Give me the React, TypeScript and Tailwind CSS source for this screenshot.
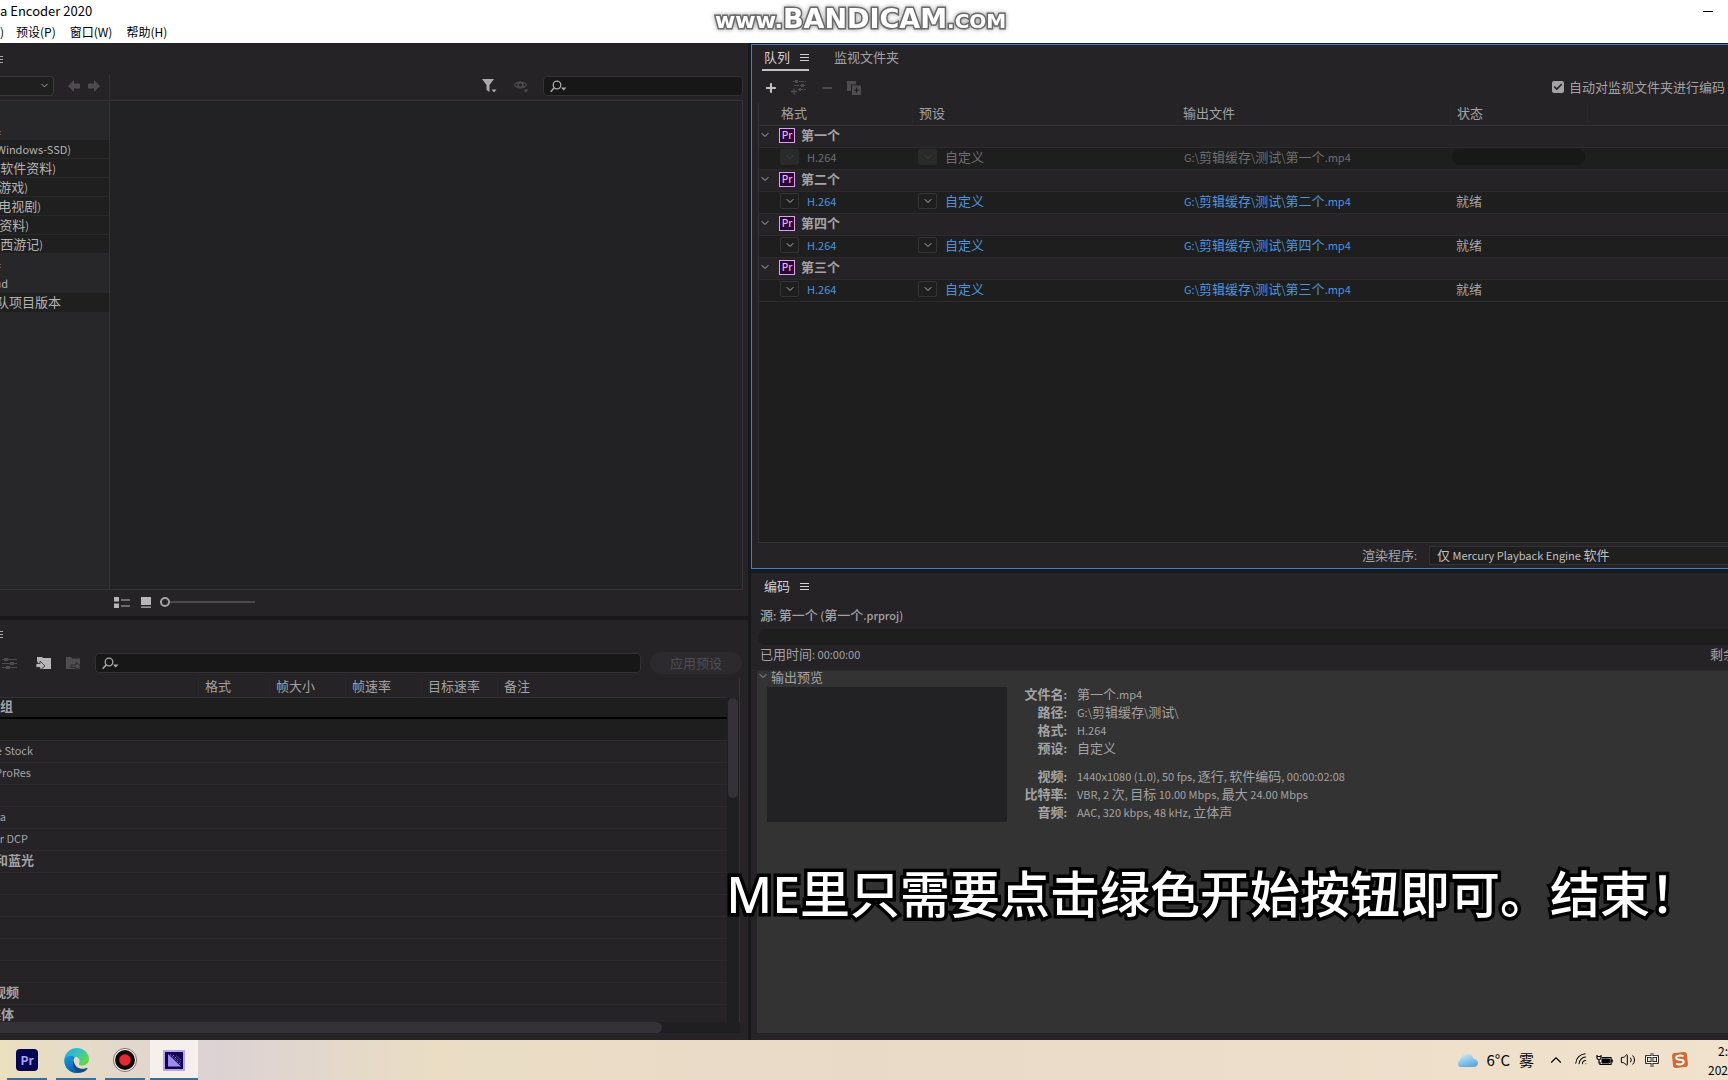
import { useState } from 'react';
import { Check, ChevronDown, ChevronUp, Minus, Plus, Wifi, Volume2 } from 'lucide-react';

const DRIVES = [
  { name: 'Windows-SSD)', width: 'w-[71px]' },
  { name: '软件资料)', width: 'w-[56px]' },
  { name: '游戏)', width: 'w-[28px]' },
  { name: '电视剧)', width: 'w-[41px]' },
  { name: '资料)', width: 'w-[29px]' },
  { name: '西游记)', width: 'w-[43px]' },
];

const QUEUE = [
  { name: '第一个', ready: false },
  { name: '第二个', ready: true },
  { name: '第四个', ready: true },
  { name: '第三个', ready: true },
];

const PRESETS = [
  { name: 'e Stock', width: 'w-[33px]' },
  { name: 'ProRes', width: 'w-[31px]' },
  { name: '', width: 'w-0' },
  { name: 'a', width: 'w-[6px]' },
  { name: 'r DCP', width: 'w-[28px]' },
  { name: '和蓝光', width: 'w-[34px]' },
  { name: '', width: 'w-0' },
  { name: '', width: 'w-0' },
  { name: '', width: 'w-0' },
  { name: '', width: 'w-0' },
  { name: '', width: 'w-0' },
  { name: '视频', width: 'w-[19px]' },
  { name: '媒体', width: 'w-[14px]' },
];

const FILE_INFO = [
  ['文件名', '第一个.mp4'],
  ['路径', 'G:\\剪辑缓存\\测试\\'],
  ['格式', 'H.264'],
  ['预设', '自定义'],
];

const MEDIA_INFO = [
  ['视频', '1440x1080 (1.0), 50 fps, 逐行, 软件编码, 00:00:02:08'],
  ['比特率', 'VBR, 2 次, 目标 10.00 Mbps, 最大 24.00 Mbps'],
  ['音频', 'AAC, 320 kbps, 48 kHz, 立体声'],
];

// Latin runs are set smaller than the Chinese around them
function Mixed({ text }: { text: string }) {
  return (
    <>
      {text.split(/([\x20-\x7e]+)/).filter(Boolean).map((part, i) =>
        /^[\x20-\x7e]+$/.test(part) ? (
          <span key={i} className="text-[11px] whitespace-pre">{part}</span>
        ) : (
          part
        )
      )}
    </>
  );
}

// Labels of the left column run off the window edge, so only the tail shows
function Tail({ text, width }: { text: string; width: string }) {
  return (
    <span className={`flex justify-end overflow-hidden whitespace-nowrap ${width}`}>
      <span><Mixed text={text} /></span>
    </span>
  );
}

function MenuLines() {
  return (
    <svg width="9" height="9" viewBox="0 0 9 9" stroke="currentColor" className="shrink-0">
      <path d="M0 1.5h9M0 4.5h9M0 7.5h9" />
    </svg>
  );
}

function SearchIcon() {
  return (
    <svg width="17" height="13" viewBox="0 0 17 13" fill="none" stroke="currentColor" className="shrink-0">
      <circle cx="7" cy="5" r="3.8" strokeWidth="1.3" />
      <path d="M4.3 7.7 0.7 11.8" strokeWidth="1.5" />
      <path d="M11 7.5h5.5L13.7 10.5z" fill="currentColor" stroke="none" />
    </svg>
  );
}

function SlidersIcon() {
  return (
    <svg width="15" height="13" viewBox="0 0 15 13" stroke="currentColor" fill="currentColor">
      <path d="M0 2.5h15M0 6.5h15M0 10.5h15" />
      <path d="M2 1h4v3H2zM8 5h4v3H8zM4 9h4v3H4z" stroke="none" />
    </svg>
  );
}

function PresetAddIcon() {
  return (
    <svg width="15" height="15" viewBox="0 0 15 15" stroke="currentColor" fill="currentColor">
      <path d="M2 1.5h13M3 5.5h12M7 9.5h8" strokeDasharray="5 1" />
      <path d="M4 0h3v3H4zM10 4h3v3h-3zM8 8h2v3H8z" stroke="none" />
      <path d="M0 11.5h6M3 8.5v6" strokeWidth="1.4" />
    </svg>
  );
}

function PremiereBadge() {
  return (
    <span className="flex h-[15px] w-4 items-center justify-center border border-[#d9a5ea] bg-[#2a0636] text-[10px] leading-none font-medium text-[#e3b4f3]">
      Pr
    </span>
  );
}

function SmallDropdown({ label, disabled }: { label: string; disabled?: boolean }) {
  return (
    <button
      aria-label={label}
      disabled={disabled}
      className={`flex h-4 w-[19px] items-center justify-center rounded-[2px] border ${
        disabled ? 'border-[#2a2a2b] bg-[#2a2a2b] text-[#444]' : 'border-[#343435] text-[#b4b4b4]'
      }`}
    >
      <ChevronDown size={12} />
    </button>
  );
}

function MediaBrowser() {
  return (
    <section className="flex flex-col overflow-hidden bg-[#252326]">
      <div className="flex h-8 items-center text-[#a8a8a8]">
        <button aria-label="菜单" className="flex w-[3px] justify-end overflow-hidden">
          <MenuLines />
        </button>
      </div>
      <div className="flex h-[25px] shrink-0">
        <div className="flex w-[110px] items-center border-r border-[#343336] pb-[3px]">
          <div className="relative">
            <select aria-label="位置" className="block h-5 w-[54px] appearance-none rounded-r-sm border border-l-0 border-[#39383b] bg-[#1f1f20]" />
            <ChevronDown size={11} className="pointer-events-none absolute top-1 right-1 text-[#b0b0b0]" />
          </div>
          <div className="ml-[14px] flex gap-2 text-[#4d4c4f]">
            <button aria-label="后退">
              <svg width="12" height="12" viewBox="0 0 12 12" fill="currentColor"><path d="M0 6 6 0v3.5h6v5H6V12z" /></svg>
            </button>
            <button aria-label="前进">
              <svg width="12" height="12" viewBox="0 0 12 12" fill="currentColor"><path d="M12 6 6 0v3.5H0v5h6V12z" /></svg>
            </button>
          </div>
        </div>
        <div className="flex flex-1 items-center justify-end pr-[5px] pb-[3px]">
          <button aria-label="筛选" className="mr-[17px] text-[#a9a8aa]">
            <svg width="15" height="14" viewBox="0 0 15 14" fill="currentColor">
              <path d="M0 0h12L7.5 6v7L4.5 11V6zM9.5 10.500h5L12 13.500z" />
            </svg>
          </button>
          <button aria-label="显示" className="mr-[14px] text-[#4d4c4f]">
            <svg width="15" height="14" viewBox="0 0 15 14" fill="none" stroke="currentColor">
              <path d="M0.500 6C3 2 10 2 12.500 6 10 10 3 10 0.500 6z" strokeWidth="1.2" />
              <circle cx="6.500" cy="6" r="2.500" strokeWidth="1.600" />
              <path d="M9.500 10.500h5L12 13.500z" fill="currentColor" stroke="none" />
            </svg>
          </button>
          <label className="flex h-5 w-[200px] items-center rounded-sm border border-[#323134] bg-[#171717] pl-[6px] text-[#a9a8aa]">
            <SearchIcon />
            <input aria-label="搜索媒体" className="min-w-0 flex-1 bg-transparent text-[13px] outline-none" />
          </label>
        </div>
      </div>
      <div className="mr-[5px] flex min-h-0 flex-1 border-y border-r border-[#343336] bg-[#222224]">
        <div className="w-[110px] shrink-0 border-r border-[#343336] bg-[#272729] pt-5 text-[13px] text-[#b4b3b4]">
          <div className="flex h-[19px] items-center"><Tail text="器" width="w-[1px]" /></div>
          {DRIVES.map((d) => (
            <div key={d.name} className="flex h-[19px] items-center border-b border-[#29292a] bg-[#1f1f20] pb-px">
              <Tail text={d.name} width={d.width} />
            </div>
          ))}
          <div className="flex h-[19px] items-center"><Tail text="器" width="w-[1px]" /></div>
          <div className="flex h-5 items-center"><Tail text="ud" width="w-2" /></div>
          <div className="flex h-[19px] items-center bg-[#1f1f20] pb-[2px]"><Tail text="队项目版本" width="w-[61px]" /></div>
        </div>
      </div>
      <div className="flex h-[26px] items-center pb-[2px] pl-[114px] text-[#b7b6b8]">
        <button aria-label="列表视图">
          <svg width="16" height="11" viewBox="0 0 16 11" fill="currentColor">
            <path d="M0 0h5v4.500H0zM0 6.500h5V11H0zM7 2.500h9v1H7zM7 8.500h9v1H7z" />
          </svg>
        </button>
        <button aria-label="缩略图视图" className="ml-[11px]">
          <svg width="10" height="11" viewBox="0 0 10 11" fill="currentColor"><path d="M0 0h10v8H0zM0 9.500h10v1.200H0z" /></svg>
        </button>
        <input
          type="range"
          aria-label="缩放"
          defaultValue={0}
          className="ml-[9px] h-[2px] w-[95px] appearance-none bg-[#4a494c] [&::-webkit-slider-thumb]:size-[10px] [&::-webkit-slider-thumb]:appearance-none [&::-webkit-slider-thumb]:rounded-full [&::-webkit-slider-thumb]:border-2 [&::-webkit-slider-thumb]:border-[#a3a2a4] [&::-webkit-slider-thumb]:bg-[#252326]"
        />
      </div>
    </section>
  );
}

function PresetBrowser() {
  return (
    <section className="flex flex-col overflow-hidden bg-[#252326]">
      <div className="flex h-7 shrink-0 items-center text-[#a8a8a8]">
        <button aria-label="菜单" className="flex w-[3px] justify-end overflow-hidden"><MenuLines /></button>
      </div>
      <div className="flex h-[30px] shrink-0 items-center pr-[6px] pl-[2px]">
        <button aria-label="预设设置" className="text-[#4d4c4f]"><SlidersIcon /></button>
        <button aria-label="导入预设" className="ml-[19px] text-[#b7b6b8]">
          <svg width="15" height="13" viewBox="0 0 15 13" fill="currentColor">
            <path d="M1 0h5l1 1h8v11H7z" />
            <path d="M1 0h5v5l3 3.500L7 12h-2L1 4z" />
            <path d="M0 6.500h4V4l5 5-5 4v-2.500H0z" stroke="#252326" strokeWidth="0.800" />
          </svg>
        </button>
        <button aria-label="导出预设" className="ml-[15px] text-[#4d4c4f]">
          <svg width="15" height="13" viewBox="0 0 15 13" fill="currentColor">
            <path d="M0 0h5l1 1.500h8V12H0z" />
            <path d="M5 8h5V5.500l5 3.700-5 3.800v-2.500H5z" stroke="#252326" strokeWidth="0.800" />
          </svg>
        </button>
        <label className="ml-[14px] flex h-5 flex-1 items-center rounded-sm border border-[#323134] bg-[#171717] pl-[6px] text-[#a9a8aa]">
          <SearchIcon />
          <input aria-label="搜索预设" className="min-w-0 flex-1 bg-transparent text-[13px] outline-none" />
        </label>
        <button disabled className="ml-[9px] h-[22px] w-[92px] rounded-full bg-[#2c2a2d] text-[13px] text-[#4e4d50]">
          应用预设
        </button>
      </div>
      <div className="mr-2 flex min-h-0 flex-1 border-r border-[#343336]">
        <div className="min-w-0 flex-1 overflow-hidden">
          <table className="w-full table-fixed border-separate border-spacing-0 text-[13px] leading-4 text-[#a3a2a4]">
            <colgroup>
              <col className="w-[198px]" />
              <col className="w-[71px]" />
              <col className="w-[76px]" />
              <col className="w-[76px]" />
              <col className="w-[76px]" />
              <col />
            </colgroup>
            <thead>
              <tr className="h-5">
                <th aria-label="名称" className="border-b border-[#323134]" />
                {['格式', '帧大小', '帧速率', '目标速率', '备注'].map((h) => (
                  <th key={h} className="border-b border-l border-b-[#323134] border-l-[#2a282b] pb-[3px] pl-[6px] text-left font-normal">{h}</th>
                ))}
              </tr>
            </thead>
            <tbody>
              <tr>
                <td colSpan={6} className="h-[21px] border-b-2 border-black bg-[#1e1e1e] pb-[3px] font-bold">
                  <Tail text="组" width="w-[13px]" />
                </td>
              </tr>
              <tr><td colSpan={6} className="h-[22px] border-b border-[#2b2a2d] bg-[#1e1e1e]" /></tr>
              {PRESETS.map((p, i) => (
                <tr key={i}>
                  <td colSpan={6} className={`h-[22px] border-b border-[#2b2a2d] pb-[3px] ${i > 4 ? 'font-bold' : ''}`}>
                    <Tail text={p.name} width={p.width} />
                  </td>
                </tr>
              ))}
            </tbody>
          </table>
        </div>
        <div className="mt-5 w-3 bg-[#1f1e20] px-px">
          <div className="h-[100px] rounded-full bg-[#343236]" />
        </div>
      </div>
      <div className="mr-2 mb-[7px] h-[11px] shrink-0 bg-[#1f1e20]">
        <div className="h-full w-[662px] rounded-r-full bg-[#343236]" />
      </div>
    </section>
  );
}

function QueuePanel() {
  const [autoEncode, setAutoEncode] = useState(true);
  const th = 'border-b border-b-[#323134] border-l-[#2a282b] pb-[2px] text-left font-normal';
  return (
    <section className="flex min-h-0 flex-col overflow-hidden border border-r-0 border-[#4f7ea6] bg-[#252326] text-[13px] text-[#a3a2a4] outline-2 outline-[#0f1a2c]">
      <div className="flex h-[26px] shrink-0 gap-[25px] pl-[10px]">
        <div className="flex items-center gap-[10px] border-b-2 border-[#c4c3c4] text-[#d2d1d2]">
          <button className="pb-px pl-[2px]">队列</button>
          <button aria-label="菜单"><MenuLines /></button>
        </div>
        <button className="pb-[3px]">监视文件夹</button>
      </div>
      <div className="flex h-8 shrink-0 items-center pt-px pr-[3px] pl-3">
        <button aria-label="添加源" className="text-[#c4c3c4]"><Plus size={14} strokeWidth={3.500} /></button>
        <button aria-label="添加输出" className="ml-[13px] text-[#4d4c4f]"><PresetAddIcon /></button>
        <button aria-label="移除" className="ml-[14px] text-[#4d4c4f]"><Minus size={14} strokeWidth={3.500} /></button>
        <button aria-label="重制" className="ml-[13px] text-[#4d4c4f]">
          <svg width="14" height="14" viewBox="0 0 14 14" fill="currentColor">
            <path d="M0 0h9v3.500H4V10H0z" />
            <path d="M5 4.500h9V14H5z" />
            <path d="M7 9.200h5M9.500 6.700v5" stroke="#1c1b1d" />
          </svg>
        </button>
        <label className="ml-auto flex items-center gap-[5px] pb-[2px] whitespace-nowrap">
          <span className="relative flex">
            <input
              type="checkbox"
              checked={autoEncode}
              onChange={(e) => setAutoEncode(e.target.checked)}
              className="size-3 appearance-none rounded-[2px] bg-[#a3a2a4]"
            />
            {autoEncode && <Check size={10} strokeWidth={4} className="pointer-events-none absolute top-px left-px text-[#252326]" />}
          </span>
          自动对监视文件夹进行编码
        </label>
      </div>
      <div className="ml-[6px] min-h-0 flex-1 border-b border-l border-[#323134] bg-[#1e1e1e]">
        <table className="w-full table-fixed border-separate border-spacing-0 leading-4">
          <colgroup>
            <col className="w-[153px]" />
            <col className="w-[265px]" />
            <col className="w-[273px]" />
            <col className="w-[137px]" />
            <col />
          </colgroup>
          <thead>
            <tr className="h-[23px] bg-[#252326]">
              <th className={`${th} pl-[22px]`}>格式</th>
              <th className={`${th} border-l pl-[6px]`}>预设</th>
              <th className={`${th} border-l pl-[5px]`}>输出文件</th>
              <th className={`${th} border-l pl-[6px]`}>状态</th>
              <th aria-label="操作" className={`${th} border-l`} />
            </tr>
          </thead>
          {QUEUE.map((q) => (
            <tbody key={q.name}>
              <tr className="bg-[#252326]">
                <td colSpan={5} className="h-[22px] border-b border-[#2b2a2d] pb-[3px]">
                  <div className="flex items-center">
                    <button aria-label="折叠" className="text-[#b4b4b4]"><ChevronDown size={12} /></button>
                    <span className="ml-2"><PremiereBadge /></span>
                    <span className="ml-[6px] font-bold">{q.name}</span>
                  </div>
                </td>
              </tr>
              <tr className={q.ready ? 'text-[#4f93dc]' : 'text-[#6f6e70]'}>
                <td className="h-[22px] border-b border-[#2b2a2d] pb-[3px]">
                  <div className="flex items-center gap-2 pl-[21px]">
                    <SmallDropdown label="选择格式" disabled={!q.ready} />
                    <a href="#format"><Mixed text="H.264" /></a>
                  </div>
                </td>
                <td className="h-[22px] border-b border-[#2b2a2d] pb-[3px]">
                  <div className="flex items-center gap-2 pl-[6px]">
                    <SmallDropdown label="选择预设" disabled={!q.ready} />
                    <a href="#preset">自定义</a>
                  </div>
                </td>
                <td className="h-[22px] border-b border-[#2b2a2d] pb-[3px] pl-[7px]">
                  <a href="#output"><Mixed text={`G:\\剪辑缓存\\测试\\${q.name}.mp4`} /></a>
                </td>
                <td className="h-[22px] border-b border-[#2b2a2d] pb-[3px] text-[#a3a2a4]">
                  {q.ready ? <span className="pl-[6px]">就绪</span> : <div className="mx-[2px] h-4 rounded-full bg-[#181818]" />}
                </td>
                <td className="h-[22px] border-b border-[#2b2a2d]" />
              </tr>
            </tbody>
          ))}
        </table>
      </div>
      <div className="flex h-[25px] shrink-0 items-center justify-end gap-3">
        <label htmlFor="renderer" className="pb-[2px]"><Mixed text="渲染程序:" /></label>
        <div className="relative w-[299px]">
          <select id="renderer" className="block h-[19px] w-full appearance-none border border-r-0 border-[#323134] bg-[#1f1f20] text-transparent">
            <option>仅 Mercury Playback Engine 软件</option>
          </select>
          <span aria-hidden="true" className="pointer-events-none absolute inset-0 flex items-center pb-[2px] pl-2 text-[#c0bfc0]">
            <span><Mixed text="仅 Mercury Playback Engine 软件" /></span>
          </span>
        </div>
      </div>
    </section>
  );
}

function InfoRows({ rows }: { rows: string[][] }) {
  return (
    <dl className="text-[13px] leading-[18px]">
      {rows.map(([label, value]) => (
        <div key={label} className="flex gap-[10px]">
          <dt className="w-[60px] text-right font-bold whitespace-nowrap"><Mixed text={`${label}:`} /></dt>
          <dd className="whitespace-nowrap"><Mixed text={value} /></dd>
        </div>
      ))}
    </dl>
  );
}

function EncodingPanel() {
  return (
    <section className="flex min-h-0 flex-col overflow-hidden bg-[#252326] text-[13px] text-[#a3a2a4]">
      <div className="flex h-[26px] shrink-0 items-center gap-[10px] pl-[13px] text-[#d2d1d2]">
        <h2>编码</h2>
        <button aria-label="菜单"><MenuLines /></button>
      </div>
      <p className="flex h-[30px] shrink-0 items-center pt-px pl-[9px] font-medium whitespace-pre">
        <span><Mixed text="源: 第一个 (第一个.prproj)" /></span>
      </p>
      <div className="ml-[7px] h-4 shrink-0 rounded-l-full bg-[#1e1e1e]" />
      <div className="flex h-[26px] shrink-0 items-center justify-between border-b border-[#2b2a2d] pb-2 pl-[9px]">
        <span><Mixed text="已用时间: 00:00:00" /></span>
        <span className="w-[18px] overflow-hidden whitespace-nowrap">剩余</span>
      </div>
      <div className="mb-[7px] ml-[6px] flex-1 bg-[#333333]">
        <button className="flex h-[10px] items-center gap-[2px] leading-none">
          <ChevronDown size={12} />输出预览
        </button>
        <div className="flex pt-1 pl-[10px]">
          <div className="mt-[2px] h-[135px] w-[240px] bg-[#222224]" />
          <div className="flex flex-col gap-[10px]">
            <InfoRows rows={FILE_INFO} />
            <InfoRows rows={MEDIA_INFO} />
          </div>
        </div>
      </div>
    </section>
  );
}

function TitleBar() {
  return (
    <header className="relative flex h-[43px] shrink-0 flex-col bg-white text-black">
      <div className="flex h-[22px] items-center justify-between">
        <h1 className="text-[13px] whitespace-nowrap">a Encoder 2020</h1>
        <button aria-label="最小化" className="pr-[15px]">
          <svg width="10" height="1" viewBox="0 0 10 1"><path d="M0 0h10v1H0z" /></svg>
        </button>
      </div>
      <nav className="flex h-5 items-center text-xs">
        <span className="w-4 overflow-hidden">)</span>
        <button className="mr-[14px]">预设(P)</button>
        <button className="mr-[14px]">窗口(W)</button>
        <button>帮助(H)</button>
      </nav>
      <div className="absolute top-[5px] left-[715px] flex items-baseline font-['DejaVu_Sans',sans-serif] leading-none font-bold text-white [paint-order:stroke_fill] [-webkit-text-stroke:3px_#6a6a6a] [filter:drop-shadow(0_0_2px_#999)]">
        <span className="text-[22px]">www.</span>
        <span className="text-[27px]">BANDICAM</span>
        <span className="text-[20px]">.COM</span>
      </div>
    </header>
  );
}

function Taskbar() {
  const app = 'flex h-10 items-center justify-center border-b-2 border-[#2f71a0] pt-[2px]';
  return (
    <footer className="flex h-10 shrink-0 items-center bg-linear-to-r from-[#ebe0c0] via-[#e9dac8] to-[#f0e2cc] text-black">
      <div className="flex flex-1 items-center bg-linear-to-r from-transparent via-[#dcd2d3] via-15% to-[#efe2c0]/0 to-30% pl-[7px]">
        <button aria-label="Premiere Pro" className={`${app} mr-[9px] w-10`}>
          <span className="flex size-[22px] items-center justify-center rounded-[4px] bg-[#06054f] text-xs font-bold text-[#a5a3ff]">Pr</span>
        </button>
        <button aria-label="Edge" className={`${app} mr-[9px] w-10`}>
          <svg width="25" height="25" viewBox="0 0 24 24">
            <defs>
              <linearGradient id="edge-top" x1="0" y1="0" x2="1" y2="0.600">
                <stop offset="0" stopColor="#2aa6dc" />
                <stop offset="0.500" stopColor="#35c1c4" />
                <stop offset="1" stopColor="#62d84b" />
              </linearGradient>
              <linearGradient id="edge-low" x1="0" y1="0" x2="0.700" y2="1">
                <stop offset="0" stopColor="#1b9de0" />
                <stop offset="1" stopColor="#0c4f9c" />
              </linearGradient>
            </defs>
            <path d="M0.300 10.500C1.500 4 6.500 0 12.200 0 19 0 24 5 24 10.500c0 4-3 6.300-6.300 6.300-2.800 0-3.700-1-3.400-2 1.500-2 0.700-5-2.300-6.200C8 7 2.500 7.500 0.300 10.500z" fill="url(#edge-top)" />
            <path d="M0.300 10.500C2.300 7 7.500 6.500 11 8.500c-1.500 1-2 3-1.500 5 1 4 4 6.500 8.500 6.500 2 0 3.500-0.500 4.500-1C20.500 22.500 16 24 12 24 4.500 24-0.500 17.500 0.300 10.500z" fill="url(#edge-low)" />
            <path d="M9.500 12.500c0 4 3 7.800 7.500 7.800 2.500 0 4-0.600 5-1.100 0.500-0.200 0.800 0.200 0.500 0.600C21 21.700 18.500 23.500 16 23.600 10 22.500 7.500 17 9.500 12.500z" fill="#154a86" />
          </svg>
        </button>
        <button aria-label="Bandicam" className={`${app} mr-[5px] w-10`}>
          <svg width="24" height="24" viewBox="0 0 24 24">
            <circle cx="12" cy="12" r="11.500" fill="#fff" stroke="#5a4a44" strokeWidth="0.800" />
            <circle cx="12" cy="12" r="10" fill="#160808" />
            <circle cx="12" cy="12" r="5.800" fill="#e22c33" />
          </svg>
        </button>
        <button aria-label="Media Encoder" className={`${app} w-12 bg-[#f6f0ec]`}>
          <svg width="22" height="21" viewBox="0 0 22 21">
            <path d="M0 0h22v21H0z" fill="#b9a6ea" />
            <path d="M2 2h18v17H2z" fill="#120650" />
            <path d="M5 4v12.500h13z" fill="#9f8bf0" />
            <path d="M7 4.500l11 10.500M10 5l8 7.500M13.500 6l4.500 4" stroke="#8d7be0" strokeDasharray="1.500 1" />
          </svg>
        </button>
      </div>
      <div className="flex h-10 items-center overflow-hidden">
        <svg width="22" height="15" viewBox="0 0 22 15">
          <defs>
            <linearGradient id="cloud" x1="0" y1="0" x2="0.500" y2="1">
              <stop offset="0" stopColor="#d7effc" />
              <stop offset="1" stopColor="#5fa8dd" />
            </linearGradient>
          </defs>
          <path d="M4 14a4 4 0 0 1 0-7C5 3 8 1 11 1c4 0 6 2 6.500 5 3 0 4.500 2 4.500 4 0 2.500-2 4-4 4z" fill="url(#cloud)" />
        </svg>
        <span className="ml-[9px] flex gap-[9px] text-[15px]"><span>6°C</span><span>雾</span></span>
        <button aria-label="显示隐藏的图标" className="ml-[13px]"><ChevronUp size={18} strokeWidth={1.500} /></button>
        <span className="ml-[9px] -rotate-45"><Wifi size={16} strokeWidth={1.500} /></span>
        <svg width="17" height="13" viewBox="0 0 17 13" fill="none" stroke="black" className="ml-[6px]">
          <path d="M6 3.500h9v7H4V8M16.200 5.500v3" strokeWidth="1.200" />
          <path d="M6 5h7.500v4H6z" fill="black" />
          <path d="M1 1v3c0 2 4 2 4 0V1M0.500 2.500h5M3 5v4.500" strokeWidth="1.200" />
        </svg>
        <span className="ml-[7px]"><Volume2 size={16} strokeWidth={1.500} /></span>
        <svg width="14" height="16" viewBox="0 0 14 16" fill="none" className="ml-[9px]">
          <path d="M1.500 4.500h11v6h-11zM7 1v14" stroke="black" strokeWidth="2.600" />
          <path d="M1.500 4.500h11v6h-11zM7 1v14" stroke="white" strokeWidth="1" />
        </svg>
        <svg width="16" height="16" viewBox="0 0 16 16" fill="none" className="ml-[13px] -rotate-6">
          <rect x="0.500" y="0.500" width="15" height="15" rx="3" fill="#cf6a33" />
          <path d="M12 4.500C9 3 4 3 4.500 5.800c0.500 2.700 7 1.200 7 4C11.500 13 6.500 13 3.800 11.300" stroke="white" strokeWidth="2" />
        </svg>
        <div className="ml-5 flex flex-col items-end text-xs leading-[19px]">
          <span>2:</span>
          <span>202</span>
        </div>
      </div>
    </footer>
  );
}

export default function App() {
  return (
    <div className="relative flex h-screen flex-col overflow-hidden bg-[#18171a] font-['Noto_Sans_CJK_SC',sans-serif]">
      <TitleBar />
      <main className="grid min-h-0 flex-1 grid-cols-[minmax(0,748fr)_minmax(0,977fr)] gap-[3px]">
        <div className="grid min-h-0 grid-rows-[minmax(0,573fr)_minmax(0,420fr)] gap-1">
          <MediaBrowser />
          <PresetBrowser />
        </div>
        <div className="grid min-h-0 grid-rows-[minmax(0,525fr)_minmax(0,467fr)] gap-1 pt-px">
          <QueuePanel />
          <EncodingPanel />
        </div>
      </main>
      <Taskbar />
      <p className="absolute right-7 bottom-[150px] font-['Noto_Sans','Noto_Sans_CJK_SC',sans-serif] text-[50px] leading-[72px] font-medium whitespace-nowrap text-white [paint-order:stroke_fill] [-webkit-text-stroke:7px_black]">
        ME里只需要点击绿色开始按钮即可。结束！
      </p>
    </div>
  );
}
